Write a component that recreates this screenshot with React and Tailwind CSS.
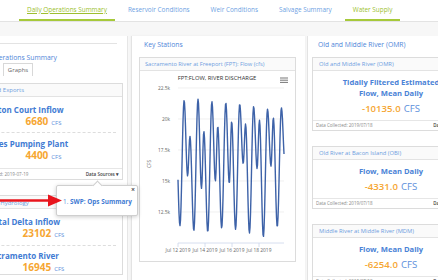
import React from "react";

const tr = [11.6, 11.4, 11.0, 10.9, 11.2, 11.1, 10.8, 10.5, 11.3, 11.2, 11.2];
const pk = [21.4, 21.5, 21.6, 21.4, 21.3, 21.2, 21.0, 20.8, 20.9, 21.0];
const mt = [15.5, 15.4, 14.4, 15.0, 14.8, 16.4, 16.0, 16.2, 16.5, 16.5];
const sp = [18.8, 18.6, 19.0, 19.4, 19.8, 19.6, 19.9, 20.1, 19.2, 19.2];

function val(t) {
  const d = Math.floor(t);
  const f = t - d;
  const segs = [
    [0, tr[d]],
    [0.3, pk[d]],
    [0.55, mt[d]],
    [0.72, sp[d]],
    [1, tr[d + 1]],
  ];
  for (let i = 0; i < segs.length - 1; i++) {
    const [a, va] = segs[i];
    const [b, vb] = segs[i + 1];
    if (f >= a && f <= b) {
      const u = (f - a) / (b - a);
      const w = (1 - Math.cos(Math.PI * u)) / 2;
      return va + (vb - va) * w;
    }
  }
  return tr[d];
}

const yOf = (v) => 172 - (v - 10) * 12.4;

function seriesPath() {
  const pts = [];
  for (let x = 38; x <= 144; x += 0.5) {
    const t = (x - 38) / 13.9 + 0.86;
    pts.push(`${x.toFixed(1)},${yOf(val(t)).toFixed(1)}`);
  }
  return "M" + pts.join(" L");
}

function Nav() {
  const tabs = [
    { label: "Daily Operations Summary", active: true, underline: true },
    { label: "Reservoir Conditions" },
    { label: "Weir Conditions" },
    { label: "Salvage Summary" },
    { label: "Water Supply", active: true },
  ];
  return (
    <div className="h-[21px] box-content bg-white border-b border-[#e3e3e3] flex pl-[19px] gap-[5px]">
      {tabs.map((t) =>
        t.active ? (
          <div
            key={t.label}
            className={
              "h-[21px] px-[8px] flex items-center border-b-2 border-[#a6c93a] text-[6.4px] text-[#9dbf2f] whitespace-nowrap" +
              (t.underline ? " underline" : "")
            }
          >
            {t.label}
          </div>
        ) : (
          <div
            key={t.label}
            className="h-[21px] px-[8px] flex items-center border-b-2 border-transparent text-[6.4px] text-[#6e9fe3] whitespace-nowrap"
          >
            {t.label}
          </div>
        )
      )}
    </div>
  );
}

function LeftItem({ title, value, pl }) {
  return (
    <div>
      <div
        className="h-[11px] text-[8px] leading-[11px] font-bold text-[#3f7bd3] whitespace-nowrap"
        style={{ paddingLeft: pl }}
      >
        {title}
      </div>
      <div className="h-[13px] flex items-baseline justify-center whitespace-nowrap leading-[13px]">
        <span className="text-[10px] leading-[13px] font-bold text-[#f6a632]">{value}</span>
        <span className="text-[6px] leading-[13px] text-[#5d8fdb] ml-[3px]">CFS</span>
      </div>
    </div>
  );
}

function LeftPanel() {
  return (
    <div className="w-[172px] ml-[-44px] shrink-0 h-[262px] bg-white border-r border-[#e6e6e6] pl-[8px] pr-[4px]">
      <div className="mt-[7px] mr-[6px] border-t border-[#e3e3e3]" />
      <div className="mt-[9px] pl-[8px] h-[10px] text-[6.8px] leading-[10px] text-[#4f86d9] whitespace-nowrap">
        Daily Operations Summary
      </div>
      <div className="flex h-[13px]">
        <div className="w-[39px] flex items-center justify-center text-[6px] text-[#4f86d9]">Summary</div>
        <div className="w-[30px] border border-b-0 border-[#d8d8d8] flex items-center justify-center text-[6px] text-[#666666]">
          Graphs
        </div>
      </div>
      <div className="mt-[7px] border border-[#dcdcdc] bg-white">
        <div className="h-[13px] bg-[#fafafa] border-b border-[#e3e3e3] flex items-center pl-[4px] text-[6px] text-[#6d9de0] whitespace-nowrap">
          Inflows and Exports
        </div>
        <div className="pt-[7px]">
          <LeftItem title="Clifton Court Inflow" value="6680" pl="20px" />
          <div className="mt-[4px] mx-[6px] border-t border-dashed border-[#dddddd]" />
          <div className="mt-[5px]">
            <LeftItem title="Jones Pumping Plant" value="4400" pl="21px" />
          </div>
        </div>
        <div className="mt-[6px] h-[11px] border-t border-[#e6e6e6] flex items-center justify-between pl-[6px] pr-[3px] text-[4.6px] whitespace-nowrap">
          <span className="text-[#888888]">Data Collected: 2019-07-19</span>
          <span className="text-[#444444] font-semibold">Data Sources ▾</span>
        </div>
      </div>
      <div className="mt-[15px] border border-[#dcdcdc] bg-white">
        <div className="h-[13px] bg-[#fafafa] border-b border-[#e3e3e3] flex items-center pl-[19px] pt-[2px] text-[6px] text-[#6d9de0] whitespace-nowrap">
          Delta Hydrology
        </div>
        <div className="pt-[7px]">
          <LeftItem title="Total Delta Inflow" value="23102" pl="24px" />
          <div className="mt-[5px] mx-[6px] border-t border-dashed border-[#dddddd]" />
          <div className="mt-[4px]">
            <LeftItem title="Sacramento River" value="16945" pl="23px" />
          </div>
        </div>
      </div>
    </div>
  );
}

function Chart() {
  const grid = [
    { v: 22.5, l: "22.5k" },
    { v: 20, l: "20k" },
    { v: 17.5, l: "17.5k" },
    { v: 15, l: "15k" },
    { v: 12.5, l: "12.5k" },
  ];
  const ticks = [
    { x: 38, l: "Jul 12 2019" },
    { x: 65, l: "Jul 14 2019" },
    { x: 92, l: "Jul 16 2019" },
    { x: 119, l: "Jul 18 2019" },
  ];
  return (
    <svg width="155" height="190" viewBox="0 0 155 190" className="block" style={{ fontFamily: "'Open Sans', sans-serif" }}>
      <text x="77" y="9" textAnchor="middle" fontSize="5.8" fill="#333333">
        FPT:FLOW, RIVER DISCHARGE
      </text>
      <g stroke="#666666" strokeWidth="0.9">
        <line x1="140" y1="7" x2="148" y2="7" />
        <line x1="140" y1="9.2" x2="148" y2="9.2" />
        <line x1="140" y1="11.4" x2="148" y2="11.4" />
      </g>
      {grid.map((g) => (
        <g key={g.l}>
          <line x1="38" x2="144" y1={yOf(g.v)} y2={yOf(g.v)} stroke="#e6e6e6" strokeWidth="0.6" />
          <text x="30" y={yOf(g.v) + 1.8} textAnchor="end" fontSize="4.8" fill="#666666">
            {g.l}
          </text>
        </g>
      ))}
      <line x1="38" x2="144" y1="172" y2="172" stroke="#ccd6eb" strokeWidth="0.8" />
      {ticks.map((t) => (
        <g key={t.l}>
          <line x1={t.x} x2={t.x} y1="172" y2="176" stroke="#ccd6eb" strokeWidth="0.8" />
          <text x={t.x} y="181" textAnchor="middle" fontSize="4.9" fill="#666666">
            {t.l}
          </text>
        </g>
      ))}
      <text x="11" y="93" textAnchor="middle" fontSize="4.8" fill="#666666" transform="rotate(-90 11 93)">
        CFS
      </text>
      <path d={seriesPath()} fill="none" stroke="#3d62a8" strokeWidth="1.4" strokeLinejoin="round" />
    </svg>
  );
}

function MiddlePanel() {
  return (
    <div className="w-[174px] ml-[3px] shrink-0 h-[262px] bg-white border-l border-[#e3e3e3] shadow-[0_0_2px_rgba(0,0,0,0.06)]">
      <div className="pt-[4px] pl-[12px] h-[13px] text-[6.8px] leading-[9px] text-[#4f86d9]">Key Stations</div>
      <div className="mt-[8px] ml-[7px] mr-[9px] border border-[#dcdcdc] bg-white">
        <div className="h-[13px] bg-[#fafafa] border-b border-[#e3e3e3] flex items-center pl-[5px] text-[5.7px] text-[#6d9de0] whitespace-nowrap">
          Sacramento River at Freeport (FPT): Flow (cfs)
        </div>
        <Chart />
      </div>
    </div>
  );
}

function RightCard({ title, lines, value, className }) {
  return (
    <div className={"border border-[#dcdcdc] bg-white " + (className || "")}>
      <div className="h-[13px] bg-[#fafafa] border-b border-[#e3e3e3] flex items-center pl-[6px] text-[5.8px] text-[#6d9de0] whitespace-nowrap">
        {title}
      </div>
      <div className="pt-[6px] pb-[7px] flex flex-col items-center">
        {lines.map((l) => (
          <div key={l} className="h-[11px] text-[7.6px] leading-[11px] font-bold text-[#4a82d6] whitespace-nowrap">
            {l}
          </div>
        ))}
        <div className="mt-[1px] h-[13px] leading-[13px] whitespace-nowrap">
          <span className="text-[9.6px] font-semibold text-[#f6a632]">{value}</span>
          <span className="text-[9.6px] text-[#5d8fdb] ml-[3px]">CFS</span>
        </div>
      </div>
      <div className="h-[10px] border-t border-[#e6e6e6] flex items-center justify-between px-[3px] text-[4.5px] text-[#888888] whitespace-nowrap">
        <span>Data Collected: 2019/07/18</span>
        <span className="text-[#444444] font-semibold">Data Sources ▾</span>
      </div>
    </div>
  );
}

function RightPanel() {
  return (
    <div className="w-[170px] ml-[2px] shrink-0 h-[262px] bg-white border-l border-[#e3e3e3] pl-[4px] pr-[7px]">
      <div className="pt-[4px] pl-[6px] h-[13px] text-[6.8px] leading-[9px] text-[#4f86d9] whitespace-nowrap">
        Old and Middle River (OMR)
      </div>
      <RightCard
        className="mt-[8px]"
        title="Old and Middle River (OMR)"
        lines={["Tidally Filtered Estimated", "Flow, Mean Daily"]}
        value="-10135.0"
      />
      <RightCard
        className="mt-[15px]"
        title="Old River at Bacon Island (OBI)"
        lines={["Flow, Mean Daily"]}
        value="-4331.0"
      />
      <RightCard
        className="mt-[15px]"
        title="Middle River at Middle River (MDM)"
        lines={["Flow, Mean Daily"]}
        value="-6254.0"
      />
    </div>
  );
}

function Popover() {
  return (
    <div className="absolute left-[56px] top-[185px] w-[82px] h-[31px] bg-white border border-[#cfcfcf] rounded-[2px] shadow-[0_1px_4px_rgba(0,0,0,0.2)]">
      <div className="absolute left-[37px] top-[-4px] w-[7px] h-[7px] bg-white border-l border-t border-[#cfcfcf] rotate-45" />
      <div className="absolute right-[2px] top-[0px] text-[7px] leading-[8px] font-bold text-[#555555]">×</div>
      <div className="pt-[11px] pl-[6px] text-[6.4px] leading-[9px] whitespace-nowrap">
        <span className="text-[#5d8fdb]">1. </span>
        <span className="font-bold text-[#3f7bd3]">SWP: Ops Summary</span>
      </div>
    </div>
  );
}

function RedArrow() {
  return (
    <svg className="absolute left-0 top-[194px]" width="64" height="13" viewBox="0 0 64 13">
      <line x1="0" y1="6.5" x2="52" y2="6.5" stroke="#e8141c" strokeWidth="2.4" />
      <polygon points="48,0.5 62,6.5 48,12.5" fill="#e8141c" />
    </svg>
  );
}

export default function App() {
  return (
    <div className="relative w-[438px] h-[280px] overflow-hidden bg-[#f7f7f7] font-['Open_Sans',sans-serif]">
      <Nav />
      <div className="flex items-start pt-[14px]">
        <LeftPanel />
        <MiddlePanel />
        <RightPanel />
      </div>
      <Popover />
      <RedArrow />
    </div>
  );
}
